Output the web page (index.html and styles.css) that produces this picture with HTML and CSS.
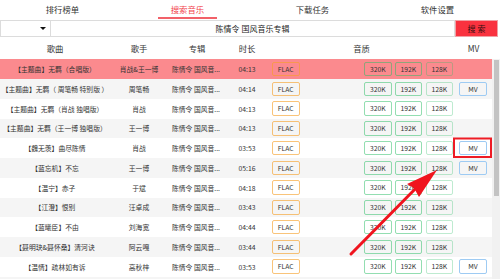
FILE: index.html
```html
<!DOCTYPE html>
<html lang="zh">
<head>
<meta charset="utf-8">
<title>音乐下载</title>
<link rel="stylesheet" href="styles.css">
</head>
<body>
<div class="app">
  <nav class="tabs">
    <div class="tab"><span>排行榜单</span></div>
    <div class="tab active"><span>搜索音乐</span></div>
    <div class="tab"><span>下载任务</span></div>
    <div class="tab"><span>软件设置</span></div>
  </nav>
  <div class="search">
    <div class="select"><span class="caret"></span></div>
    <div class="query">陈情令 国风音乐专辑</div>
    <div class="btn">搜 索</div>
  </div>
  <div class="thead">
    <div class="c-song">歌曲</div>
    <div class="c-singer">歌手</div>
    <div class="c-album h">专辑</div>
    <div class="c-dur">时长</div>
    <div class="c-q h">音质</div>
    <div class="c-mv h">MV</div>
  </div>
  <div class="body">
    <div class="rows">
      <div class="row sel">
        <div class="c-song">【主题曲】无羁（合唱版）</div>
        <div class="c-singer">肖战&amp;王一博</div>
        <div class="c-album">陈情令 国风音...</div>
        <div class="c-dur">04:13</div>
        <div class="c-q"><span class="b flac">FLAC</span><span class="b k320">320K</span><span class="b k192">192K</span><span class="b k128">128K</span></div>
        <div class="c-mv"></div>
      </div>
      <div class="row">
        <div class="c-song">【主题曲】无羁（ 周笔畅  特别版 ）</div>
        <div class="c-singer">周笔畅</div>
        <div class="c-album">陈情令 国风音...</div>
        <div class="c-dur">04:14</div>
        <div class="c-q"><span class="b flac">FLAC</span><span class="b k320">320K</span><span class="b k192">192K</span><span class="b k128">128K</span></div>
        <div class="c-mv"><span class="b mv">MV</span></div>
      </div>
      <div class="row">
        <div class="c-song">【主题曲】无羁（肖战  独唱版）</div>
        <div class="c-singer">肖战</div>
        <div class="c-album">陈情令 国风音...</div>
        <div class="c-dur">04:13</div>
        <div class="c-q"><span class="b flac">FLAC</span><span class="b k320">320K</span><span class="b k192">192K</span><span class="b k128">128K</span></div>
        <div class="c-mv"></div>
      </div>
      <div class="row">
        <div class="c-song">【主题曲】无羁（王一博  独唱版）</div>
        <div class="c-singer">王一博</div>
        <div class="c-album">陈情令 国风音...</div>
        <div class="c-dur">04:13</div>
        <div class="c-q"><span class="b flac">FLAC</span><span class="b k320">320K</span><span class="b k192">192K</span><span class="b k128">128K</span></div>
        <div class="c-mv"></div>
      </div>
      <div class="row">
        <div class="c-song">【魏无羡】曲尽陈情</div>
        <div class="c-singer">肖战</div>
        <div class="c-album">陈情令 国风音...</div>
        <div class="c-dur">03:53</div>
        <div class="c-q"><span class="b flac">FLAC</span><span class="b k320">320K</span><span class="b k192">192K</span><span class="b k128">128K</span></div>
        <div class="c-mv"><span class="b mv">MV</span></div>
      </div>
      <div class="row">
        <div class="c-song">【蓝忘机】不忘</div>
        <div class="c-singer">王一博</div>
        <div class="c-album">陈情令 国风音...</div>
        <div class="c-dur">05:16</div>
        <div class="c-q"><span class="b flac">FLAC</span><span class="b k320">320K</span><span class="b k192">192K</span><span class="b k128">128K</span></div>
        <div class="c-mv"><span class="b mv">MV</span></div>
      </div>
      <div class="row">
        <div class="c-song">【温宁】赤子</div>
        <div class="c-singer">于斌</div>
        <div class="c-album">陈情令 国风音...</div>
        <div class="c-dur">04:18</div>
        <div class="c-q"><span class="b flac">FLAC</span><span class="b k320">320K</span><span class="b k192">192K</span><span class="b k128">128K</span></div>
        <div class="c-mv"></div>
      </div>
      <div class="row">
        <div class="c-song">【江澄】恨别</div>
        <div class="c-singer">汪卓成</div>
        <div class="c-album">陈情令 国风音...</div>
        <div class="c-dur">03:43</div>
        <div class="c-q"><span class="b flac">FLAC</span><span class="b k320">320K</span><span class="b k192">192K</span><span class="b k128">128K</span></div>
        <div class="c-mv"></div>
      </div>
      <div class="row">
        <div class="c-song">【蓝曦臣】不由</div>
        <div class="c-singer">刘海宽</div>
        <div class="c-album">陈情令 国风音...</div>
        <div class="c-dur">04:44</div>
        <div class="c-q"><span class="b flac">FLAC</span><span class="b k320">320K</span><span class="b k192">192K</span><span class="b k128">128K</span></div>
        <div class="c-mv"></div>
      </div>
      <div class="row">
        <div class="c-song">【聂明玦&amp;聂怀桑】清河诀</div>
        <div class="c-singer">阿云嘎</div>
        <div class="c-album">陈情令 国风音...</div>
        <div class="c-dur">03:44</div>
        <div class="c-q"><span class="b flac">FLAC</span><span class="b k320">320K</span><span class="b k192">192K</span><span class="b k128">128K</span></div>
        <div class="c-mv"></div>
      </div>
      <div class="row">
        <div class="c-song">【温情】疏林如有诉</div>
        <div class="c-singer">高秋梓</div>
        <div class="c-album">陈情令 国风音...</div>
        <div class="c-dur">03:53</div>
        <div class="c-q"><span class="b flac">FLAC</span><span class="b k320">320K</span><span class="b k192">192K</span><span class="b k128">128K</span></div>
        <div class="c-mv"><span class="b mv">MV</span></div>
      </div>
      <div class="row">
        <div class="c-song"></div>
      </div>
    </div>
    <div class="scrollbar"><div class="thumb"></div></div>
  </div>
  <svg class="annot" width="500" height="279" viewBox="0 0 500 279">
    <rect x="454" y="138.5" width="37" height="18.5" fill="none" stroke="#ee1c25" stroke-width="2"/>
    <line x1="351" y1="254" x2="422" y2="182" stroke="#f0141e" stroke-width="3" stroke-linecap="round"/>
    <polygon points="437,170 407,184 414,188 419,197" fill="#f0141e"/>
  </svg>
</div>
</body>
</html>
```

FILE: styles.css
```css
* { box-sizing: border-box; }
html, body { margin: 0; padding: 0; background: #fff; }
body {
  font-family: "Noto Sans CJK SC", "Microsoft YaHei", sans-serif;
  color: #333;
  width: 500px;
  height: 279px;
  overflow: hidden;
}
.app { position: relative; width: 500px; height: 279px; overflow: hidden; }

.tabs { display: flex; height: 20px; }
.tab {
  flex: 1;
  display: flex;
  justify-content: center;
  align-items: flex-end;
  padding-bottom: 1px;
  font-size: 8.4px;
  color: #333;
}
.tab span {
  display: block;
  height: 19px;
  line-height: 18px;
  padding: 0 13px;
  border-bottom: 2px solid transparent;
}
.tab.active span { color: #f2444b; border-bottom-color: #f26169; }

.search { display: flex; height: 17px; padding-right: 2px; }
.select {
  width: 51px;
  border: 1px solid #dcdcdc;
  position: relative;
  display: flex;
  align-items: center;
  justify-content: flex-end;
  padding-right: 4px;
}
.caret {
  width: 0; height: 0;
  border-left: 3px solid transparent;
  border-right: 3px solid transparent;
  border-top: 3px solid #111;
}
.query {
  flex: 1;
  border: 1px solid #dcdcdc;
  border-left: none;
  font-size: 8px;
  line-height: 15px;
  text-align: center;
  color: #222;
}
.btn {
  width: 43px;
  background: #f9323f;
  border: 1px solid #f0a0a5;
  font-size: 8px;
  line-height: 15px;
  text-align: center;
  color: #331010;
}

.thead {
  display: flex;
  height: 22.3px;
  align-items: center;
  font-size: 8.4px;
  color: #333;
  padding-right: 8px;
}
.thead > div { text-align: center; }

.body { display: flex; height: 220px; }
.rows { flex: 1; overflow: hidden; }
.row {
  display: flex;
  align-items: center;
  height: 19.76px;
  font-size: 6.8px;
  color: #333;
  white-space: nowrap;
}
.row:nth-child(odd) { background: #fff; }
.row:nth-child(even) { background: #f5f5f5; }
.row.sel { background: #fb8a8e; }

.c-song { width: 110px; text-align: center; overflow: hidden; }
.c-singer { width: 58px; text-align: center; }
.c-album { width: 58px; padding-left: 4px; }
.c-album.h { padding-left: 0; text-align: center; }
.c-dur { width: 42px; text-align: center; }
.c-q { width: 187px; display: flex; align-items: center; padding-left: 4px; }
.c-q.h { display: block; padding-left: 0; text-align: center; }
.c-mv { width: 37px; display: flex; align-items: center; padding-left: 4px; }
.c-mv.h { display: block; padding-left: 0; text-align: center; }

.b {
  display: block;
  height: 14.5px;
  width: 27.5px;
  border: 1px solid;
  border-radius: 2px;
  font-size: 6.8px;
  line-height: 12.5px;
  text-align: center;
  color: #333;
}
.flac { border-color: rgba(246, 160, 40, 0.62); }
.k320 { border-color: rgba(40, 190, 100, 0.5); margin-left: 64.5px; }
.k192 { border-color: rgba(40, 190, 100, 0.5); margin-left: 3px; }
.k128 { border-color: rgba(40, 190, 100, 0.3); margin-left: 3.5px; }
.mv { border-color: #9ecbf3; width: 28px; }

.scrollbar { width: 8px; background: #f1f1f1; padding: 1px 1px 0 2px; }
.thumb { height: 136px; background: #c3c3c3; }

.annot { position: absolute; left: 0; top: 0; pointer-events: none; }
```
